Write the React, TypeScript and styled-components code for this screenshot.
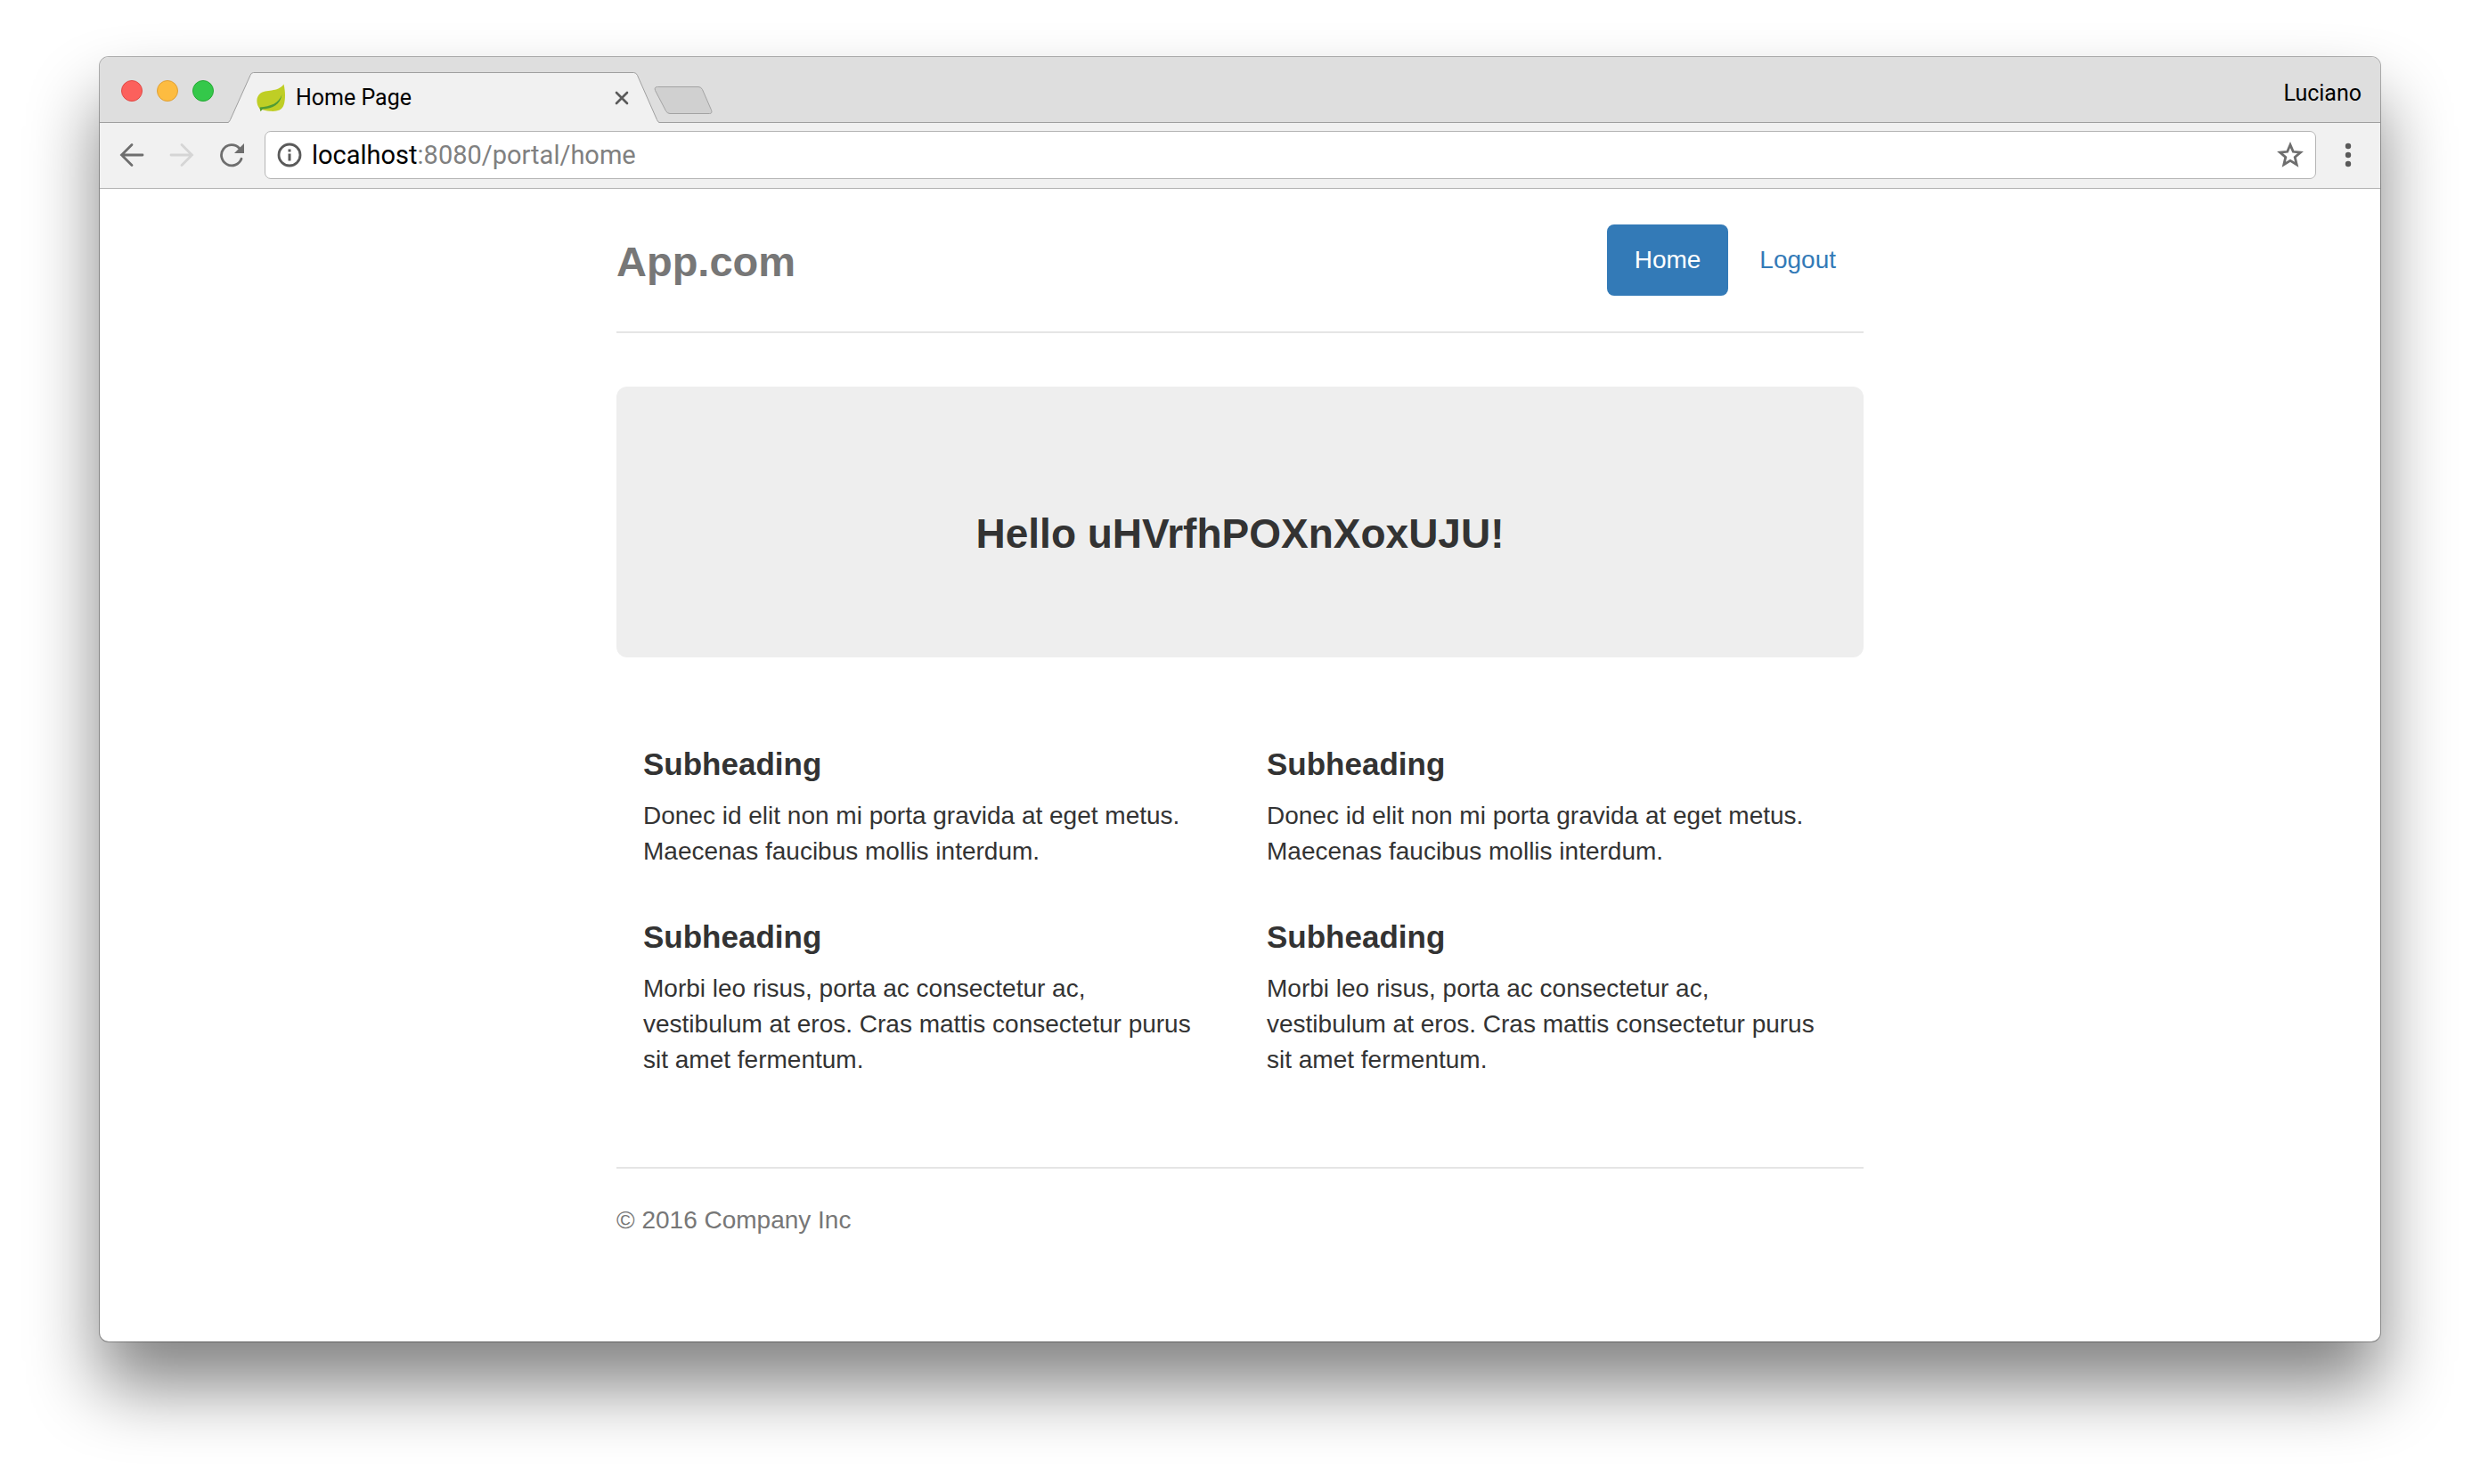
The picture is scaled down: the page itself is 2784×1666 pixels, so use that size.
import React from "react";
import styled, { createGlobalStyle } from "styled-components";

const GlobalStyle = createGlobalStyle`
  *, *::before, *::after { box-sizing: border-box; }
  body { margin: 0; background: #fff; }
  h1, h2, h3, p { margin: 0; }
  button, input { font: inherit; color: inherit; }
`;

const chromeFont = `Roboto, "Liberation Sans", sans-serif`;
const pageFont = `"Liberation Sans", Arial, sans-serif`;

const Desktop = styled.div`
  padding: 64px 112px 160px;
`;

const Window = styled.div`
  border-radius: 10px;
  background: #fff;
  box-shadow: 0 0 0 1px rgba(0, 0, 0, 0.3), 0 50px 80px rgba(0, 0, 0, 0.49);
`;

const TitleBar = styled.header`
  display: flex;
  align-items: stretch;
  height: 74px;
  padding: 0 21px 0 24px;
  border-bottom: 1px solid #9f9f9f;
  border-radius: 10px 10px 0 0;
  background: #dedede;
  font-family: ${chromeFont};
  font-size: 25px;
  color: #000;
`;

const Lights = styled.div`
  display: flex;
  align-items: center;
  gap: 16px;
  padding-top: 3px;
`;

const Light = styled.button<{ $fill: string; $edge: string }>`
  width: 24px;
  height: 24px;
  padding: 0;
  border: 1px solid ${(p) => p.$edge};
  border-radius: 50%;
  background: ${(p) => p.$fill};
`;

const Tab = styled.div`
  position: relative;
  display: flex;
  align-items: center;
  width: 484px;
  height: 57px;
  margin: 17px 0 -1px 16px;
  padding: 0 34px 0 32px;
`;

const TabShape = styled.svg`
  position: absolute;
  inset: 0;
`;

const TabTitle = styled.span`
  position: relative;
  flex: 1;
  padding-left: 12px;
  line-height: 32px;
`;

const Favicon = styled.svg`
  position: relative;
`;

const IconButton = styled.button`
  position: relative;
  display: flex;
  align-items: center;
  justify-content: center;
  flex: none;
  padding: 0;
  border: 0;
  background: none;
`;

const NewTab = styled(IconButton)`
  align-self: flex-start;
  margin: 32px 0 0 -7px;
`;

const Profile = styled(IconButton)`
  margin-left: auto;
  padding-top: 8px;
`;

const Toolbar = styled.nav`
  display: flex;
  align-items: center;
  gap: 28px;
  height: 74px;
  padding: 0 28px 1px 22px;
  border-bottom: 1px solid #b3b3b3;
  background: #f1f1f1;
`;

const Address = styled.div`
  display: flex;
  align-items: center;
  flex: 1;
  height: 54px;
  margin-left: -5px;
  padding: 0 12px;
  border: 1px solid #b5b5b5;
  border-radius: 7px;
  background: #fff;
  font-family: ${chromeFont};
  font-size: 29px;
  line-height: 40px;
`;

const Host = styled.label`
  padding-left: 10px;
  color: #000;
`;

const Path = styled.input`
  flex: 1;
  min-width: 0;
  padding: 0;
  border: 0;
  outline: 0;
  background: none;
  color: #808080;
`;

const Page = styled.div`
  max-width: 1400px;
  margin: 0 auto;
  padding: 40px 0 116px;
  font-family: ${pageFont};
  font-size: 28px;
  line-height: 40px;
  color: #333;
`;

const PageHeader = styled.header`
  display: flex;
  justify-content: space-between;
  padding-bottom: 40px;
  border-bottom: 2px solid #e5e5e5;
`;

const Brand = styled.h3`
  padding-top: 4px;
  font-size: 47px;
  line-height: 76px;
  color: #777;
`;

const Nav = styled.nav`
  display: flex;
  gap: 4px;
`;

const Pill = styled.a<{ $active?: boolean }>`
  padding: 20px 31px;
  border-radius: 8px;
  background: ${(p) => (p.$active ? "#337ab7" : "transparent")};
  color: ${(p) => (p.$active ? "#fff" : "#337ab7")};
  text-decoration: none;
`;

const Jumbotron = styled.section`
  margin-top: 60px;
  padding: 138px 60px 112px;
  border-radius: 12px;
  background: #eee;
  text-align: center;
`;

const Greeting = styled.h1`
  font-size: 46px;
  line-height: 54px;
`;

const Marketing = styled.section`
  display: grid;
  grid-template-columns: 1fr 1fr;
  row-gap: 56px;
  padding: 100px 0;
`;

const Blurb = styled.article`
  padding: 0 40px 0 30px;
`;

const Subheading = styled.h2`
  margin-bottom: 18px;
  font-size: 35px;
  line-height: 40px;
`;

const Footer = styled.footer`
  padding-top: 38px;
  border-top: 2px solid #e5e5e5;
  color: #777;
`;

const donec = "Donec id elit non mi porta gravida at eget metus. Maecenas faucibus mollis interdum.";
const morbi =
  "Morbi leo risus, porta ac consectetur ac, vestibulum at eros. Cras mattis consectetur purus sit amet fermentum.";
const blurbs = [donec, donec, morbi, morbi];

const Leaf = () => (
  <Favicon width="32" height="32" viewBox="0 0 32 32" aria-hidden="true">
    <path
      d="M30.500 .5C32.500 9 32.500 18 30.500 24C28.500 30 22 31.500 15 30.800C11 30.500 8 29.500 6 29L4.500 31L3.500 28C-.5 23 -1 15 4 11C10 6 24 10 30.500 .5Z"
      fill="#bfce25"
    />
    <path d="M28.500 12C25 22 16 25.500 3.500 26.500L4.500 31L7 28.500C18 28 27 23 28.500 12Z" fill="#4f9b35" />
  </Favicon>
);

export default function App() {
  return (
    <>
      <GlobalStyle />
      <Desktop>
        <Window>
          <TitleBar>
            <Lights>
              <Light $fill="#fc605c" $edge="#e04a46" aria-label="Close window" />
              <Light $fill="#fdbc40" $edge="#dfa036" aria-label="Minimize window" />
              <Light $fill="#34c84a" $edge="#27aa35" aria-label="Zoom window" />
            </Lights>
            <Tab>
              <TabShape width="484" height="57" viewBox="0 0 484 57" aria-hidden="true">
                <path
                  d="M0 56.500Q1.500 56 2.500 53.500L25 3.500Q26 .5 28.500 .5H455.500Q458 .5 459.500 3.500L481.500 53.500Q482.500 56 484 56.500V57H0Z"
                  fill="#f1f1f1"
                />
                <path
                  d="M0 56.500Q1.500 56 2.500 53.500L25 3.500Q26 .5 28.500 .5H455.500Q458 .5 459.500 3.500L481.500 53.500Q482.500 56 484 56.500"
                  fill="none"
                  stroke="#9f9f9f"
                />
              </TabShape>
              <Leaf />
              <TabTitle>Home Page</TabTitle>
              <IconButton aria-label="Close tab">
                <svg width="16" height="16" viewBox="0 0 16 16">
                  <path d="M2 2L14 14M14 2L2 14" stroke="#5a5a5a" strokeWidth="2.600" strokeLinecap="round" />
                </svg>
              </IconButton>
            </Tab>
            <NewTab aria-label="New tab">
              <svg width="68" height="34" viewBox="0 0 68 34">
                <path
                  d="M5.500 1.500H51Q54 1.500 55.500 4.500L65.500 27.500Q67 31.500 63.500 31.500H19Q16 31.500 14.500 28.500L2.500 5.500Q1 1.500 5.500 1.500Z"
                  fill="#d0d0d0"
                  stroke="#a3a3a3"
                />
              </svg>
            </NewTab>
            <Profile>Luciano</Profile>
          </TitleBar>

          <Toolbar aria-label="Browser">
            <IconButton aria-label="Back">
              <svg width="28" height="28" viewBox="0 0 28 28" fill="none" stroke="#6e6e6e" strokeWidth="2.800">
                <path d="M26 14H2.500M14 2.500L2.500 14L14 25.500" strokeLinecap="round" />
              </svg>
            </IconButton>
            <IconButton aria-label="Forward">
              <svg width="28" height="28" viewBox="0 0 28 28" fill="none" stroke="#d5d5d5" strokeWidth="2.800">
                <path d="M2 14H25.500M14 2.500L25.500 14L14 25.500" strokeLinecap="round" />
              </svg>
            </IconButton>
            <IconButton aria-label="Reload">
              <svg width="28" height="28" viewBox="0 0 28 28">
                <path
                  d="M25 18.300A11.600 11.600 0 1 1 22.500 6.200"
                  fill="none"
                  stroke="#6e6e6e"
                  strokeWidth="2.800"
                  strokeLinecap="round"
                />
                <path d="M28 1V12H17Z" fill="#6e6e6e" />
              </svg>
            </IconButton>
            <Address>
              <svg width="30" height="30" viewBox="0 0 30 30" aria-hidden="true">
                <circle cx="15" cy="15" r="12" fill="none" stroke="#5a5a5a" strokeWidth="2.800" />
                <path d="M13.500 8.500H16.500V11.500H13.500ZM13.500 13.500H16.500V21.500H13.500Z" fill="#5a5a5a" />
              </svg>
              <Host htmlFor="address">localhost</Host>
              <Path id="address" type="text" defaultValue=":8080/portal/home" />
              <IconButton aria-label="Bookmark this page">
                <svg width="32" height="32" viewBox="0 0 32 32">
                  <path
                    d="M16 4.500L19.300 12.300L27.500 13L21.200 18.400L23.200 26.800L16 22.400L8.800 26.800L10.800 18.400L4.500 13L12.700 12.300Z"
                    fill="none"
                    stroke="#6e6e6e"
                    strokeWidth="2.800"
                  />
                </svg>
              </IconButton>
            </Address>
            <IconButton aria-label="Menu">
              <svg width="16" height="28" viewBox="0 0 16 28" fill="#5a5a5a">
                <circle cx="8" cy="4" r="3.200" />
                <circle cx="8" cy="14" r="3.200" />
                <circle cx="8" cy="24" r="3.200" />
              </svg>
            </IconButton>
          </Toolbar>

          <Page>
            <PageHeader>
              <Brand>App.com</Brand>
              <Nav>
                <Pill href="#home" $active>
                  Home
                </Pill>
                <Pill href="#logout">Logout</Pill>
              </Nav>
            </PageHeader>
            <Jumbotron>
              <Greeting>Hello uHVrfhPOXnXoxUJU!</Greeting>
            </Jumbotron>
            <Marketing>
              {blurbs.map((text, i) => (
                <Blurb key={i}>
                  <Subheading>Subheading</Subheading>
                  <p>{text}</p>
                </Blurb>
              ))}
            </Marketing>
            <Footer>
              <p>© 2016 Company Inc</p>
            </Footer>
          </Page>
        </Window>
      </Desktop>
    </>
  );
}
